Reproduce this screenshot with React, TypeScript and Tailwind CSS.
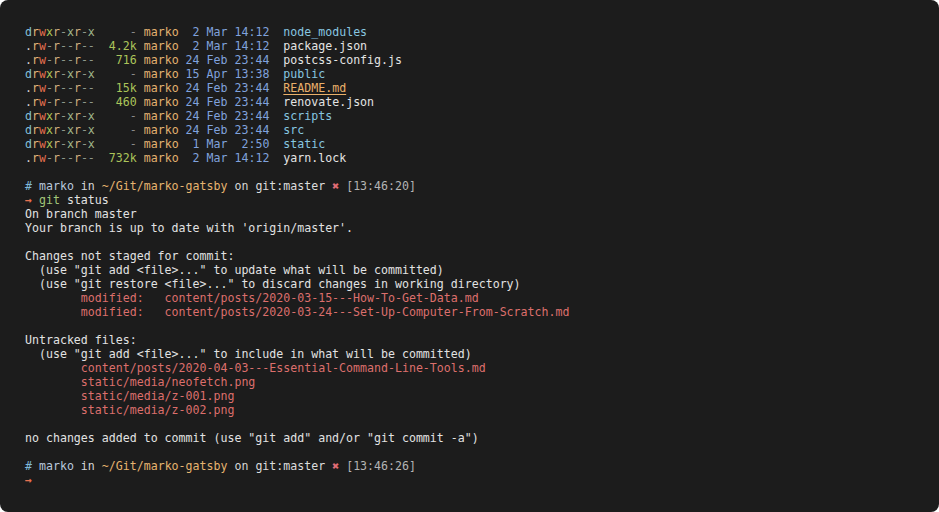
import React from "react";

const C = {
  d: "text-[#83c0d8]",
  r: "text-[#e0b677]",
  w: "text-[#e6704f]",
  x: "text-[#abc65a]",
  rg: "text-[#cfae7c]",
  xg: "text-[#a0b68a]",
  dash: "text-[#8e988c]",
  dot: "text-[#d0d0d0]",
};

function Perms({ p }: { p: string }) {
  return (
    <>
      {p.split("").map((ch, i) => {
        let cls = C.dash;
        if (ch === "d") cls = C.d;
        else if (ch === ".") cls = C.dot;
        else if (ch === "r") cls = i === 1 ? C.r : C.rg;
        else if (ch === "w") cls = C.w;
        else if (ch === "x") cls = i === 3 ? C.x : C.xg;
        return (
          <span key={i} className={cls}>
            {ch}
          </span>
        );
      })}
    </>
  );
}

type Row = { p: string; s: string; d: string; n: string; dir?: boolean; readme?: boolean };

const rows: Row[] = [
  { p: "drwxr-xr-x", s: "-", d: " 2 Mar 14:12", n: "node_modules", dir: true },
  { p: ".rw-r--r--", s: "4.2k", d: " 2 Mar 14:12", n: "package.json" },
  { p: ".rw-r--r--", s: "716", d: "24 Feb 23:44", n: "postcss-config.js" },
  { p: "drwxr-xr-x", s: "-", d: "15 Apr 13:38", n: "public", dir: true },
  { p: ".rw-r--r--", s: "15k", d: "24 Feb 23:44", n: "README.md", readme: true },
  { p: ".rw-r--r--", s: "460", d: "24 Feb 23:44", n: "renovate.json" },
  { p: "drwxr-xr-x", s: "-", d: "24 Feb 23:44", n: "scripts", dir: true },
  { p: "drwxr-xr-x", s: "-", d: "24 Feb 23:44", n: "src", dir: true },
  { p: "drwxr-xr-x", s: "-", d: " 1 Mar  2:50", n: "static", dir: true },
  { p: ".rw-r--r--", s: "732k", d: " 2 Mar 14:12", n: "yarn.lock" },
];

function Prompt({ time }: { time: string }) {
  return (
    <div>
      <span className="text-[#7fb8d8]">#</span>{" "}
      <span className="text-[#b9c8dc]">marko</span>{" "}
      <span className="text-[#d6d6d6]">in</span>{" "}
      <span className="text-[#e6b46f]">~/Git/marko-gatsby</span>{" "}
      <span className="text-[#d6d6d6]">on</span>{" "}
      <span className="text-[#dcdcdc]">git:master</span>{" "}
      <span className="text-[#e06c75]">✖</span>{" "}
      <span className="text-[#b4b4b4]">[{time}]</span>
    </div>
  );
}

const Blank = () => <div>{" "}</div>;

const red = "text-[#dc6f6c]";

export default function App() {
  return (
    <div className="min-h-screen bg-white">
      <div
        className="h-[512px] w-[939px] overflow-hidden rounded-[8px] bg-[#1c1c1c] pl-[25px] pt-[25px] text-[11.6px] leading-[14px] text-[#e2e2e2] whitespace-pre"
        style={{ fontFamily: '"DejaVu Sans Mono", "Liberation Mono", monospace' }}
      >
        {rows.map((r, i) => (
          <div key={i}>
            <Perms p={r.p} />{" "}
            <span className={r.s === "-" ? "text-[#8a8a8a]" : "text-[#abc45a]"}>{r.s.padStart(5, " ")}</span>{" "}
            <span className="text-[#e2b170]">marko</span>{" "}
            <span className="text-[#80a2dc]">{r.d}</span>
            {"  "}
            {r.readme ? (
              <span className="text-[#eab06a] underline decoration-[#eab06a] underline-offset-[2px]">{r.n}</span>
            ) : (
              <span className={r.dir ? "text-[#87c6e0]" : "text-[#e4e4e4]"}>{r.n}</span>
            )}
          </div>
        ))}
        <Blank />
        <Prompt time="13:46:20" />
        <div>
          <span className="font-bold text-[#e6714f]">→</span> <span className="text-[#a3c77a]">git</span> status
        </div>
        <div>On branch master</div>
        <div>Your branch is up to date with 'origin/master'.</div>
        <Blank />
        <div>Changes not staged for commit:</div>
        <div>{'  (use "git add <file>..." to update what will be committed)'}</div>
        <div>{'  (use "git restore <file>..." to discard changes in working directory)'}</div>
        <div className={red}>{"        modified:   content/posts/2020-03-15---How-To-Get-Data.md"}</div>
        <div className={red}>{"        modified:   content/posts/2020-03-24---Set-Up-Computer-From-Scratch.md"}</div>
        <Blank />
        <div>Untracked files:</div>
        <div>{'  (use "git add <file>..." to include in what will be committed)'}</div>
        <div className={red}>{"        content/posts/2020-04-03---Essential-Command-Line-Tools.md"}</div>
        <div className={red}>{"        static/media/neofetch.png"}</div>
        <div className={red}>{"        static/media/z-001.png"}</div>
        <div className={red}>{"        static/media/z-002.png"}</div>
        <Blank />
        <div>{'no changes added to commit (use "git add" and/or "git commit -a")'}</div>
        <Blank />
        <Prompt time="13:46:26" />
        <div>
          <span className="font-bold text-[#e6714f]">→</span>
        </div>
      </div>
    </div>
  );
}
